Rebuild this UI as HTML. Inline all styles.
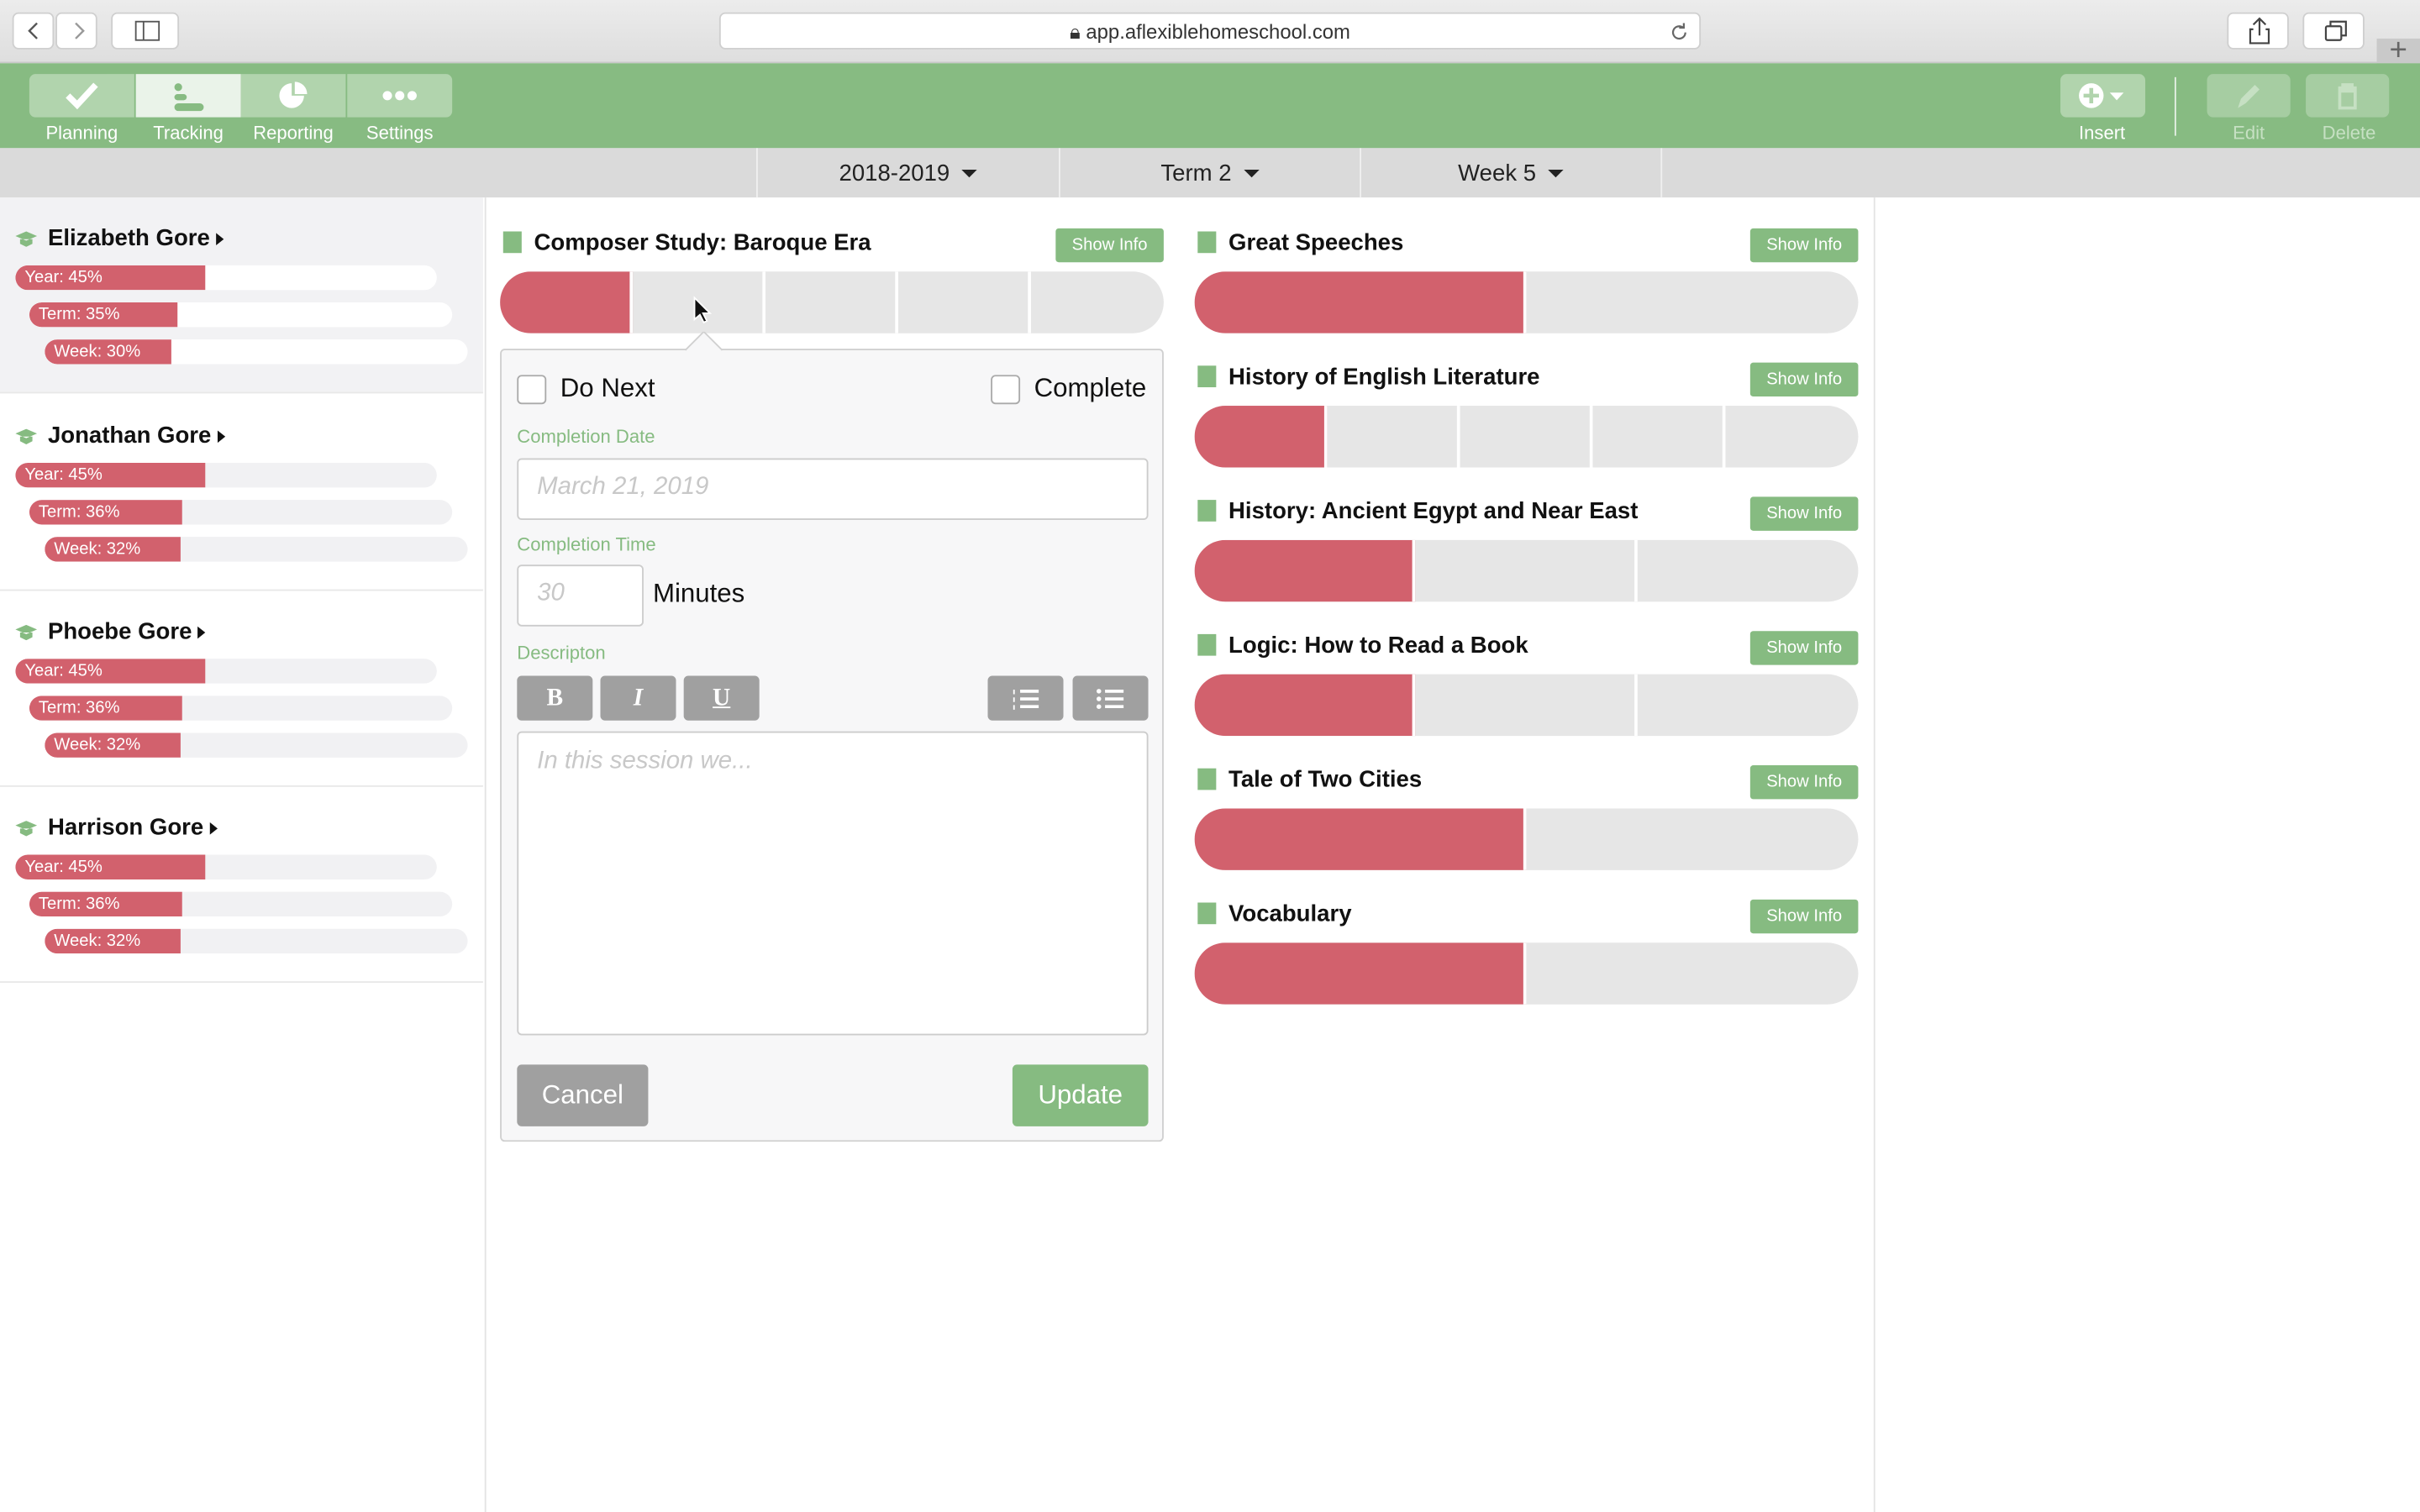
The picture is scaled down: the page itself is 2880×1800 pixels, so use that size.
<!DOCTYPE html>
<html><head><meta charset="utf-8"><style>
*{box-sizing:border-box;margin:0;padding:0}
html,body{width:2880px;height:1800px;overflow:hidden;background:#fff;font-family:"Liberation Sans",Arial,sans-serif}
#w{position:absolute;left:0;top:0;width:1568px;height:980px;transform:scale(1.836735);transform-origin:0 0;background:#fff}
.a{position:absolute}
.sb{background:linear-gradient(#ececec,#dedede)}
.btn{position:absolute;background:#fff;border:1px solid #cfcfcf;border-radius:4px;height:24px;top:8px}
.nav{position:absolute;top:48px;height:28px;width:68px;background:#b1d4ad;display:flex;align-items:center;justify-content:center}
.navl{position:absolute;top:79px;font-size:12px;color:#fff;width:68px;text-align:center}
.dd{position:absolute;top:96px;height:32px;border-left:1px solid #f0f0f0;font-size:15px;color:#222;display:flex;align-items:center;justify-content:center}
.car{display:inline-block;width:0;height:0;border-left:5px solid transparent;border-right:5px solid transparent;border-top:5px solid #222;margin-left:8px}
.stu{position:absolute;left:0;width:313px;height:127px;border-bottom:1px solid #e8e8e8}
.nm{position:absolute;left:31px;top:18px;font-size:15px;font-weight:bold;color:#111}
.nm:after{content:"";display:inline-block;border-top:4px solid transparent;border-bottom:4px solid transparent;border-left:5px solid #111;margin-left:4px}
.cap{position:absolute;left:10px;top:22px;width:14px;height:10px}
.pb{position:absolute;height:16px;border-radius:8px;background:#f1f1f3;overflow:hidden}
.pb i{position:absolute;left:0;top:0;bottom:0;background:#d2616d;font-style:normal;font-size:11px;color:#fff;line-height:16px;padding-left:6px;border-radius:8px 0 0 8px;white-space:nowrap}
.ct{position:absolute;font-size:15px;font-weight:bold;color:#111}
.bk{position:absolute;width:12px;height:14px;background:#86bb81}
.si{position:absolute;width:70px;height:22px;background:#86bb81;color:#fff;font-size:11px;text-align:center;line-height:22px;border-radius:2px}
.bar{position:absolute;height:40px;border-radius:20px;background:#e6e6e6;overflow:hidden;display:flex}
.bar div{height:100%;border-right:2px solid #fff}
.bar div:last-child{border-right:none}
.r{background:#d2616d}
.lbl{position:absolute;font-size:12px;color:#86bb81}
.inp{position:absolute;background:#fff;border:1px solid #ccc;border-radius:3px}
.ph{color:#c8c8c8;font-style:italic;font-size:16px}
.tb{position:absolute;top:438px;width:49px;height:29px;background:#a0a0a0;border-radius:3px;color:#fff;text-align:center;line-height:29px;font-size:16px;font-family:"Liberation Serif",serif;font-weight:bold}
.cb{position:absolute;width:19px;height:19px;border:1px solid #aaa;border-radius:3px;background:#fff}
</style></head><body><div id="w">
<!-- safari bar -->
<div class="a sb" style="left:0;top:0;width:1568px;height:41px;border-bottom:1px solid #c8c8c8"></div>
<div class="btn" style="left:8px;width:27px"><svg width="27" height="22"><path d="M15 6l-5 5 5 5" stroke="#555" fill="none" stroke-width="1.3"/></svg></div>
<div class="btn" style="left:36px;width:27px"><svg width="27" height="22"><path d="M12 6l5 5-5 5" stroke="#999" fill="none" stroke-width="1.3"/></svg></div>
<div class="btn" style="left:72px;width:44px"><svg width="44" height="22"><rect x="15" y="5" width="15" height="12" stroke="#555" fill="none"/><line x1="20" y1="5" x2="20" y2="17" stroke="#555"/></svg></div>
<div class="btn" style="left:466px;width:636px;text-align:center;font-size:13px;color:#333;line-height:23px">🔒︎ app.aflexiblehomeschool.com<svg style="position:absolute;right:6px;top:5px" width="14" height="14"><path d="M11 7a4 4 0 1 1-1.5-3.1M10 1v3h-3" stroke="#666" fill="none" stroke-width="1.2"/></svg></div>
<div class="btn" style="left:1443px;width:40px"><svg width="40" height="22"><path d="M20 3v11M16 7l4-4 4 4M16 10h-2v9h12v-9h-2" stroke="#444" fill="none" stroke-width="1.2"/></svg></div>
<div class="btn" style="left:1492px;width:40px"><svg width="40" height="22"><rect x="14" y="8" width="10" height="9" rx="1" stroke="#444" fill="none" stroke-width="1.2"/><path d="M17 8V5h10v9h-3" stroke="#444" fill="none" stroke-width="1.2"/></svg></div>
<div class="a" style="left:1540px;top:25px;width:28px;height:16px;background:#c9c9c9;font-size:20px;color:#666;text-align:center;line-height:8px;padding-top:4px">+</div>
<!-- green bar -->
<div class="a" style="left:0;top:41px;width:1568px;height:55px;background:#87bb82"></div>
<div class="nav" style="left:19px;border-radius:4px 0 0 4px"><svg width="24" height="20"><path d="M3 10l6 6L21 3" stroke="#fff" stroke-width="4" fill="none"/></svg></div>
<div class="nav" style="left:88px;background:#eaf3e9"><svg width="24" height="20"><rect x="3" y="2" width="5" height="5" rx="2.5" fill="#87bb82"/><rect x="3" y="9" width="8" height="4" rx="2" fill="#87bb82"/><rect x="3" y="15" width="19" height="5" rx="2.5" fill="#87bb82"/></svg></div>
<div class="nav" style="left:156px"><svg width="24" height="20"><path d="M11 2a8 8 0 1 0 8 8h-8z" fill="#fff"/><path d="M13 1v8h8a8 8 0 0 0-8-8z" fill="#fff"/></svg></div>
<div class="nav" style="left:225px;border-radius:0 4px 4px 0"><svg width="30" height="20"><circle cx="7" cy="10" r="3" fill="#fff"/><circle cx="15" cy="10" r="3" fill="#fff"/><circle cx="23" cy="10" r="3" fill="#fff"/></svg></div>
<div class="navl" style="left:19px">Planning</div><div class="navl" style="left:88px">Tracking</div><div class="navl" style="left:156px">Reporting</div><div class="navl" style="left:225px">Settings</div>
<div class="nav" style="left:1335px;width:55px;border-radius:4px"><svg width="40" height="22"><circle cx="12" cy="11" r="8" fill="#fff"/><path d="M12 6v10M7 11h10" stroke="#b1d4ad" stroke-width="2.5"/><path d="M24 9h9l-4.5 5z" fill="#fff"/></svg></div>
<div class="navl" style="left:1328px">Insert</div>
<div class="a" style="left:1409px;top:50px;width:1px;height:38px;background:#e6f0e5"></div>
<div class="nav" style="left:1430px;width:54px;border-radius:4px;background:#a6cda2"><svg width="24" height="22"><path d="M5 19l2-6 9-9 3 3-9 9z" fill="#c6e0c3"/></svg></div>
<div class="nav" style="left:1494px;width:54px;border-radius:4px;background:#a6cda2"><svg width="24" height="22"><path d="M6 6h12M9 6V4h6v2M7 8h10v11H7z" stroke="#c6e0c3" stroke-width="2" fill="none"/></svg></div>
<div class="navl" style="left:1423px;color:#c6e0c3">Edit</div><div class="navl" style="left:1488px;color:#c6e0c3">Delete</div>
<!-- gray sub bar -->
<div class="a" style="left:0;top:96px;width:1568px;height:32px;background:#dadada"></div>
<div class="dd" style="left:490px;width:196px">2018-2019<span class="car"></span></div>
<div class="dd" style="left:686px;width:195px">Term 2<span class="car"></span></div>
<div class="dd" style="left:881px;width:196px;border-right:1px solid #f0f0f0">Week 5<span class="car"></span></div>
<!-- sidebar -->
<div class="a" style="left:314px;top:128px;width:1px;height:852px;background:#e3e3e3"></div>
<div class="a" style="left:1214px;top:128px;width:1px;height:852px;background:#e3e3e3"></div>
<div class="stu" style="top:128px;background:#f2f2f4"><svg class="cap" viewBox="0 0 14 10"><path d="M0 3l7-3 7 3-7 3z M3 5v3l4 2 4-2V5" fill="#86bb81"/></svg><div class="nm">Elizabeth Gore</div>
<div class="pb" style="left:10px;top:44px;width:273px;background:#fff"><i style="width:123px">Year: 45%</i></div>
<div class="pb" style="left:19px;top:68px;width:274px;background:#fff"><i style="width:96px">Term: 35%</i></div>
<div class="pb" style="left:29px;top:92px;width:274px;background:#fff"><i style="width:82px">Week: 30%</i></div></div>
<div class="stu" style="top:256px"><svg class="cap" viewBox="0 0 14 10"><path d="M0 3l7-3 7 3-7 3z M3 5v3l4 2 4-2V5" fill="#86bb81"/></svg><div class="nm">Jonathan Gore</div>
<div class="pb" style="left:10px;top:44px;width:273px"><i style="width:123px">Year: 45%</i></div>
<div class="pb" style="left:19px;top:68px;width:274px"><i style="width:99px">Term: 36%</i></div>
<div class="pb" style="left:29px;top:92px;width:274px"><i style="width:88px">Week: 32%</i></div></div>
<div class="stu" style="top:383px"><svg class="cap" viewBox="0 0 14 10"><path d="M0 3l7-3 7 3-7 3z M3 5v3l4 2 4-2V5" fill="#86bb81"/></svg><div class="nm">Phoebe Gore</div>
<div class="pb" style="left:10px;top:44px;width:273px"><i style="width:123px">Year: 45%</i></div>
<div class="pb" style="left:19px;top:68px;width:274px"><i style="width:99px">Term: 36%</i></div>
<div class="pb" style="left:29px;top:92px;width:274px"><i style="width:88px">Week: 32%</i></div></div>
<div class="stu" style="top:510px"><svg class="cap" viewBox="0 0 14 10"><path d="M0 3l7-3 7 3-7 3z M3 5v3l4 2 4-2V5" fill="#86bb81"/></svg><div class="nm">Harrison Gore</div>
<div class="pb" style="left:10px;top:44px;width:273px"><i style="width:123px">Year: 45%</i></div>
<div class="pb" style="left:19px;top:68px;width:274px"><i style="width:99px">Term: 36%</i></div>
<div class="pb" style="left:29px;top:92px;width:274px"><i style="width:88px">Week: 32%</i></div></div>
<!-- left course -->
<div class="bk" style="left:326px;top:150px"></div><div class="ct" style="left:346px;top:149px">Composer Study: Baroque Era</div>
<div class="si" style="left:684px;top:148px">Show Info</div>
<div class="bar" style="left:324px;top:176px;width:430px"><div class="r" style="width:86px"></div><div style="width:86px"></div><div style="width:86px"></div><div style="width:86px"></div><div style="flex:1"></div></div>
<svg class="a" style="left:448px;top:192px" width="14" height="20"><path d="M2 1v14l3.5-3 2.5 5 2-1-2.5-5H12z" fill="#111" stroke="#fff"/></svg>
<!-- popover -->
<div class="a" style="left:324px;top:226px;width:430px;height:514px;background:#f7f7f8;border:1px solid #d0d0d0;border-radius:3px"></div>
<svg class="a" style="left:444px;top:215px" width="24" height="13"><path d="M0 12L12 0l12 12" fill="#f7f7f8" stroke="#d0d0d0"/></svg>
<div class="cb" style="left:335px;top:243px"></div><div class="a" style="left:363px;top:242px;font-size:17px;color:#111">Do Next</div>
<div class="cb" style="left:642px;top:243px"></div><div class="a" style="left:670px;top:242px;font-size:17px;color:#111">Complete</div>
<div class="lbl" style="left:335px;top:276px">Completion Date</div>
<div class="inp" style="left:335px;top:297px;width:409px;height:40px;padding:9px 12px"><span class="ph">March 21, 2019</span></div>
<div class="lbl" style="left:335px;top:346px">Completion Time</div>
<div class="inp" style="left:335px;top:366px;width:82px;height:40px;padding:9px 12px"><span class="ph">30</span></div>
<div class="a" style="left:423px;top:375px;font-size:17px;color:#111">Minutes</div>
<div class="lbl" style="left:335px;top:416px">Descripton</div>
<div class="tb" style="left:335px">B</div><div class="tb" style="left:389px;font-style:italic">I</div><div class="tb" style="left:443px;text-decoration:underline">U</div>
<div class="tb" style="left:640px"><svg width="20" height="16" style="margin-top:7px"><path d="M6 3h12M6 8h12M6 13h12" stroke="#fff" stroke-width="2"/><path d="M2 2v3M2 7v3M2 12v3" stroke="#fff" stroke-width="1"/></svg></div>
<div class="tb" style="left:695px"><svg width="20" height="16" style="margin-top:7px"><path d="M6 3h12M6 8h12M6 13h12" stroke="#fff" stroke-width="2"/><circle cx="2" cy="3" r="1.5" fill="#fff"/><circle cx="2" cy="8" r="1.5" fill="#fff"/><circle cx="2" cy="13" r="1.5" fill="#fff"/></svg></div>
<div class="inp" style="left:335px;top:474px;width:409px;height:197px;padding:10px 12px"><span class="ph">In this session we...</span></div>
<div class="a" style="left:335px;top:690px;width:85px;height:40px;background:#a0a0a0;border-radius:3px;color:#fff;font-size:17px;text-align:center;line-height:40px">Cancel</div>
<div class="a" style="left:656px;top:690px;width:88px;height:40px;background:#86bb81;border-radius:3px;color:#fff;font-size:17px;text-align:center;line-height:40px">Update</div>
<!-- right courses -->
<div class="bk" style="left:776px;top:150px"></div><div class="ct" style="left:796px;top:149px">Great Speeches</div><div class="si" style="left:1134px;top:148px">Show Info</div>
<div class="bar" style="left:774px;top:176px;width:430px"><div class="r" style="width:215px"></div><div style="flex:1"></div></div>
<div class="bk" style="left:776px;top:237px"></div><div class="ct" style="left:796px;top:236px">History of English Literature</div><div class="si" style="left:1134px;top:235px">Show Info</div>
<div class="bar" style="left:774px;top:263px;width:430px"><div class="r" style="width:86px"></div><div style="width:86px"></div><div style="width:86px"></div><div style="width:86px"></div><div style="flex:1"></div></div>
<div class="bk" style="left:776px;top:324px"></div><div class="ct" style="left:796px;top:323px">History: Ancient Egypt and Near East</div><div class="si" style="left:1134px;top:322px">Show Info</div>
<div class="bar" style="left:774px;top:350px;width:430px"><div class="r" style="width:143px"></div><div style="width:144px"></div><div style="flex:1"></div></div>
<div class="bk" style="left:776px;top:411px"></div><div class="ct" style="left:796px;top:410px">Logic: How to Read a Book</div><div class="si" style="left:1134px;top:409px">Show Info</div>
<div class="bar" style="left:774px;top:437px;width:430px"><div class="r" style="width:143px"></div><div style="width:144px"></div><div style="flex:1"></div></div>
<div class="bk" style="left:776px;top:498px"></div><div class="ct" style="left:796px;top:497px">Tale of Two Cities</div><div class="si" style="left:1134px;top:496px">Show Info</div>
<div class="bar" style="left:774px;top:524px;width:430px"><div class="r" style="width:215px"></div><div style="flex:1"></div></div>
<div class="bk" style="left:776px;top:585px"></div><div class="ct" style="left:796px;top:584px">Vocabulary</div><div class="si" style="left:1134px;top:583px">Show Info</div>
<div class="bar" style="left:774px;top:611px;width:430px"><div class="r" style="width:215px"></div><div style="flex:1"></div></div>
</div></body></html>
